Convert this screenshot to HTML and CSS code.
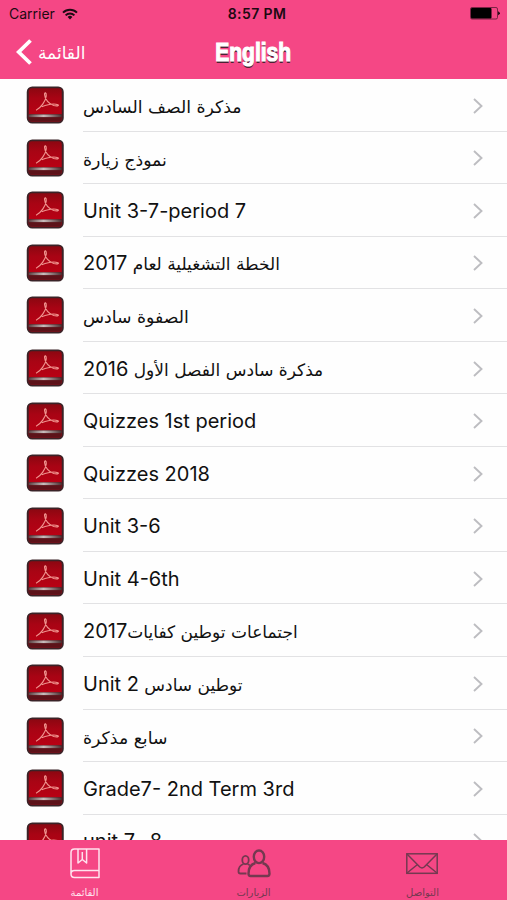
FILE: index.html
```html
<!DOCTYPE html>
<html lang="ar">
<head>
  <meta charset="UTF-8">
  <meta name="viewport" content="width=device-width, initial-scale=1.0">
  <title>English</title>
  <link rel="stylesheet" href="styles.css">
</head>
<body>

  <!-- Shared icons -->
  <svg class="defs" width="0" height="0">
    <defs>
      <linearGradient id="red" x1="0" y1="0" x2="0" y2="1">
        <stop offset="0" stop-color="#8c0711"/>
        <stop offset="0.3" stop-color="#a80414"/>
        <stop offset="1" stop-color="#c00014"/>
      </linearGradient>
      <linearGradient id="bar" x1="0" y1="0" x2="1" y2="0">
        <stop offset="0" stop-color="#5a4042"/>
        <stop offset="0.45" stop-color="#c9bcbc"/>
        <stop offset="1" stop-color="#4a2e30"/>
      </linearGradient>
      <symbol id="pdf" viewBox="0 0 38 38">
        <rect x="0.500" y="0.500" width="37" height="37" rx="5.500" fill="#3a2327"/>
        <rect x="2.500" y="2.300" width="33" height="33.200" rx="3" fill="url(#red)"/>
        <path d="M2.500 28h33v4.500q0 3-3 3h-27q-3 0-3-3z" fill="#5c1219"/>
        <rect x="2.500" y="28.500" width="33" height="2.600" fill="url(#bar)"/>
        <path d="M9.800 24.200c4.700-1.800 9.700-9.500 10.200-14.200c.3-3.500-1.800-4.300-1.700-1.500c.2 5 4.700 9.500 9.200 11c3 .9 5.800.2 4.200-.8c-3.500-1.300-11 0-16.200 2" fill="none" stroke="#ef938e" stroke-width="1.200"/>
      </symbol>
      <symbol id="next" viewBox="0 0 10 16">
        <path d="M1 1l7.500 7L1 15" fill="none" stroke="#bdbdc1" stroke-width="1.900"/>
      </symbol>
    </defs>
  </svg>

  <header class="header">
    <div class="status">
      <div class="carrier">
        <span>Carrier</span>
        <svg width="16" height="12" viewBox="0 0 16 12">
          <g fill="none" stroke="#1d0a12" stroke-width="2">
            <path d="M1 4.600a10 10 0 0 1 14 0"/>
            <path d="M3.600 7.400a6.300 6.300 0 0 1 8.800 0"/>
          </g>
          <path d="M8 11.500l-2.400-2.600a3.500 3.500 0 0 1 4.800 0z" fill="#1d0a12"/>
        </svg>
      </div>
      <div class="time">8:57 PM</div>
      <svg class="battery" width="30" height="13" viewBox="0 0 30 13">
        <rect x="0.500" y="0.500" width="27" height="11.500" rx="1.500" fill="none" stroke="#5c1a34" stroke-width="0.800"/>
        <rect x="1" y="1" width="20.500" height="10.500" rx="1" fill="#000"/>
        <path d="M28.200 4.200q1.600.8 1.600 2t-1.600 2z" fill="#000"/>
      </svg>
    </div>
    <div class="navbar">
      <a class="back">
        <svg width="16" height="26" viewBox="0 0 16 26">
          <path d="M14.500 1.500L2.700 13L14.500 24.500" fill="none" stroke="#fff" stroke-width="3.800"/>
        </svg>
        <span class="back-label">القائمة</span>
      </a>
      <h1 class="title">English</h1>
    </div>
  </header>

  <ul class="list">
    <li class="row"><svg class="pdf"><use href="#pdf"/></svg><div class="cell"><span class="ar" dir="rtl">مذكرة الصف السادس</span><svg class="next"><use href="#next"/></svg></div></li>
    <li class="row"><svg class="pdf"><use href="#pdf"/></svg><div class="cell"><span class="ar" dir="rtl">نموذج زيارة</span><svg class="next"><use href="#next"/></svg></div></li>
    <li class="row"><svg class="pdf"><use href="#pdf"/></svg><div class="cell"><span>Unit 3-7-period 7</span><svg class="next"><use href="#next"/></svg></div></li>
    <li class="row"><svg class="pdf"><use href="#pdf"/></svg><div class="cell"><span class="ar mixed" dir="rtl">الخطة التشغيلية لعام <b>2017</b></span><svg class="next"><use href="#next"/></svg></div></li>
    <li class="row"><svg class="pdf"><use href="#pdf"/></svg><div class="cell"><span class="ar" dir="rtl">الصفوة سادس</span><svg class="next"><use href="#next"/></svg></div></li>
    <li class="row"><svg class="pdf"><use href="#pdf"/></svg><div class="cell"><span class="ar mixed" dir="rtl">مذكرة سادس الفصل الأول <b>2016</b></span><svg class="next"><use href="#next"/></svg></div></li>
    <li class="row"><svg class="pdf"><use href="#pdf"/></svg><div class="cell"><span>Quizzes 1st period</span><svg class="next"><use href="#next"/></svg></div></li>
    <li class="row"><svg class="pdf"><use href="#pdf"/></svg><div class="cell"><span>Quizzes 2018</span><svg class="next"><use href="#next"/></svg></div></li>
    <li class="row"><svg class="pdf"><use href="#pdf"/></svg><div class="cell"><span>Unit 3-6</span><svg class="next"><use href="#next"/></svg></div></li>
    <li class="row"><svg class="pdf"><use href="#pdf"/></svg><div class="cell"><span>Unit 4-6th</span><svg class="next"><use href="#next"/></svg></div></li>
    <li class="row"><svg class="pdf"><use href="#pdf"/></svg><div class="cell"><span class="ar mixed" dir="rtl">اجتماعات توطين كفايات<b>2017</b></span><svg class="next"><use href="#next"/></svg></div></li>
    <li class="row"><svg class="pdf"><use href="#pdf"/></svg><div class="cell"><span class="ar mixed" dir="ltr"><b>Unit 2</b> توطين سادس</span><svg class="next"><use href="#next"/></svg></div></li>
    <li class="row"><svg class="pdf"><use href="#pdf"/></svg><div class="cell"><span class="ar" dir="rtl">سابع مذكرة</span><svg class="next"><use href="#next"/></svg></div></li>
    <li class="row"><svg class="pdf"><use href="#pdf"/></svg><div class="cell"><span>Grade7- 2nd Term 3rd</span><svg class="next"><use href="#next"/></svg></div></li>
    <li class="row"><svg class="pdf"><use href="#pdf"/></svg><div class="cell"><span>unit 7- 8</span><svg class="next"><use href="#next"/></svg></div></li>
  </ul>

  <nav class="tabs">
    <a class="tab active">
      <svg width="32" height="32" viewBox="0 0 32 32">
        <g fill="none" stroke="currentColor" stroke-width="1.500" stroke-linejoin="round">
          <path d="M30 23.500V2H5.500Q2 2 2 5.500V27q0 3.500 3.500 3.500H30V23.500H5.500Q2 23.500 2 27"/>
          <path d="M9 2v14l4.300-3.500l4.300 3.500V2M13.300 5v7.500"/>
        </g>
      </svg>
      <span>القائمة</span>
    </a>
    <a class="tab">
      <svg width="34" height="32" viewBox="0 0 34 32">
        <g fill="none" stroke="currentColor">
          <ellipse cx="22" cy="9.800" rx="5.200" ry="6.300" stroke-width="2.400"/>
          <path d="M18.500 16q-7 2-7 10.500q0 2.500 2 2.500h17q2 0 2-2.500q0-8.500-7-10.500" stroke-width="2.400"/>
          <ellipse cx="8.500" cy="13" rx="3.200" ry="4.200" stroke-width="1.800"/>
          <path d="M6.500 17q-5 1.500-5 7.500q0 2 1.800 2h6.200M10.500 17q1.500.5 2.300 1.500" stroke-width="1.800"/>
        </g>
      </svg>
      <span>الزيارات</span>
    </a>
    <a class="tab">
      <svg width="34" height="32" viewBox="0 0 34 32">
        <g fill="none" stroke="currentColor" stroke-width="1.500">
          <rect x="0.800" y="6.800" width="30.400" height="19.500"/>
          <path d="M1 7l12.800 13q2.200 1.800 4.400 0L31 7M1 26l10.500-8.500M31 26l-10.500-8.500"/>
        </g>
      </svg>
      <span>التواصل</span>
    </a>
  </nav>

</body>
</html>
```
FILE: styles.css
```css
/* Basic page styles */
body, html {
  margin: 0;
  padding: 0;
  height: 100%;
}

body {
  display: flex;
  flex-direction: column;
  overflow: hidden;
  background-color: #fefefe;
  font-family: Inter, "DejaVu Sans", sans-serif;
  color: #111;
}

.defs {
  position: absolute;
}

/* Status bar and navigation bar */
.header {
  flex: none;
  height: 79px;
  background-color: #f54785;
}

.status {
  display: grid;
  grid-template-columns: 1fr auto 1fr;
  align-items: center;
  height: 27px;
  padding: 0 7px 0 9px;
  font-size: 14px;
  color: #1d0a12;
}

.carrier {
  display: flex;
  align-items: center;
  gap: 7px;
}

.time {
  padding-left: 5px;
  font-weight: 600;
  letter-spacing: 0.4px;
}

.battery {
  justify-self: end;
}

.navbar {
  display: grid;
  grid-template-columns: 1fr auto 1fr;
  align-items: center;
  height: 50px;
  padding: 0 16px;
}

.back {
  display: flex;
  align-items: center;
  gap: 6px;
  color: #fff;
}

.back-label {
  padding-top: 2px;
  font: 17px "DejaVu Sans", sans-serif;
}

.title {
  margin: 0;
  font: bold 25px "Liberation Sans", sans-serif;
  color: #fff;
  -webkit-text-stroke: 1.2px #fff;
  text-shadow: 0 1.500px 0 #4a2233;
  transform: scaleX(0.84);
}

/* File list */
.list {
  flex: 1;
  min-height: 0;
  margin: 0;
  padding: 0;
  overflow: hidden;
  list-style: none;
}

.row {
  display: flex;
  align-items: center;
  height: 52.56px;
  padding-left: 26px;
}

.pdf {
  flex: none;
  width: 38.500px;
  height: 38px;
}

.cell {
  flex: 1;
  display: flex;
  align-items: center;
  justify-content: space-between;
  box-sizing: border-box;
  height: 100%;
  margin-left: 18.500px;
  padding: 2px 24px 0 0;
  border-bottom: 1px solid #e2e2e4;
  font-size: 20px;
  white-space: nowrap;
}

.ar {
  padding-top: 3px;
  font-family: "DejaVu Sans", sans-serif;
  font-size: 17.300px;
}

.ar.mixed {
  padding-top: 0;
  font-size: 17px;
}

.ar b {
  font: 20px Inter, sans-serif;
}

.next {
  width: 10px;
  height: 16px;
}

/* Bottom tab bar */
.tabs {
  flex: none;
  display: grid;
  grid-template-columns: repeat(3, 1fr);
  height: 60px;
  background-color: #f54785;
}

.tab {
  display: flex;
  flex-direction: column;
  align-items: center;
  padding-top: 7px;
  font: 10px "DejaVu Sans", sans-serif;
  color: #743950;
}

.tab span {
  margin-top: 8px;
}

.tab.active {
  color: #ffe3ee;
}
```
